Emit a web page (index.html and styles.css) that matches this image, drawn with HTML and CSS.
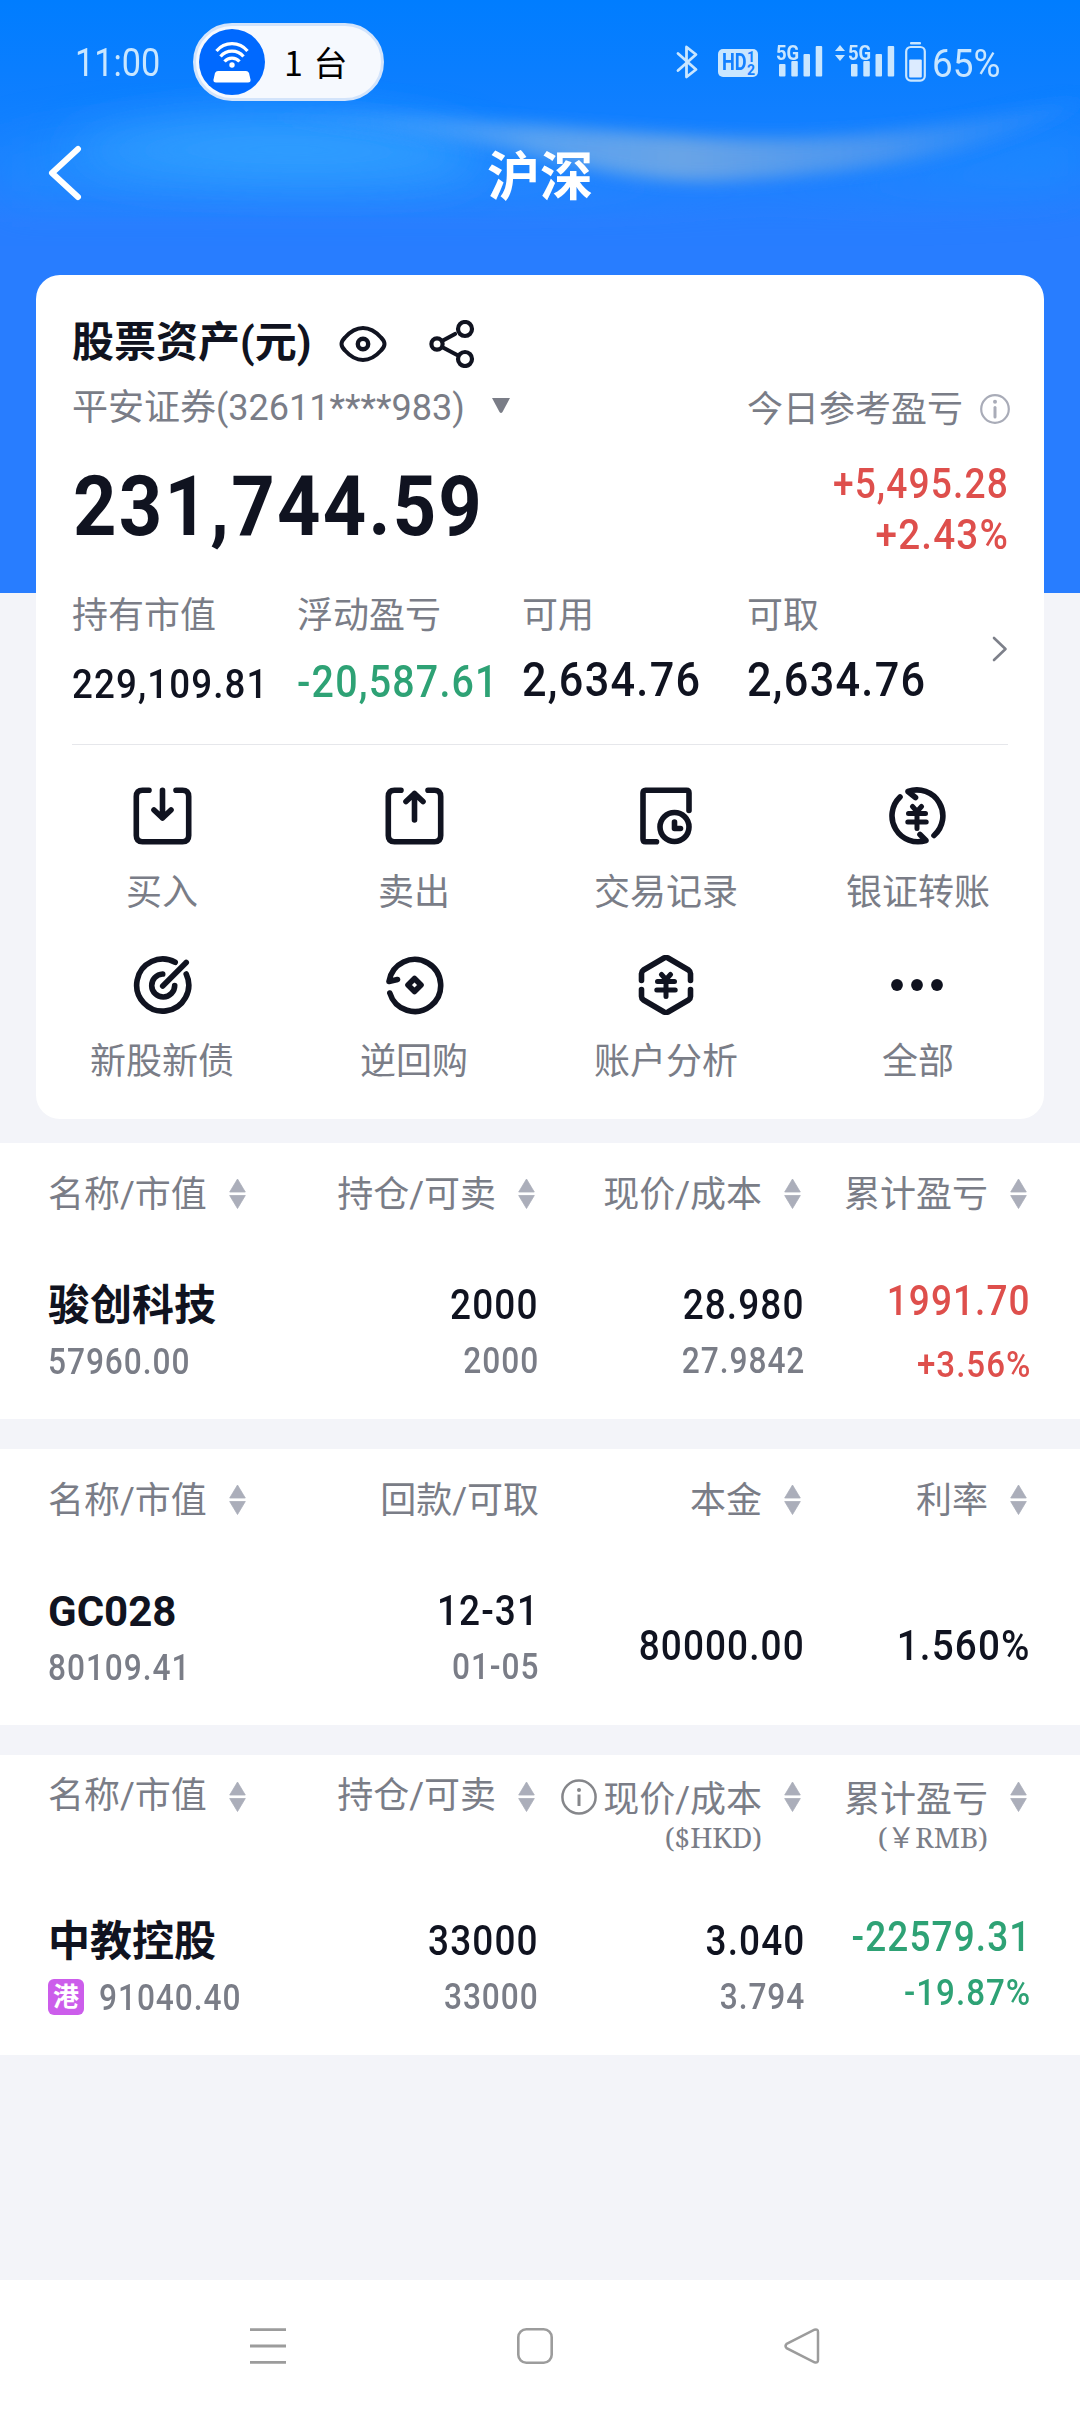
FILE: index.html
```html
<!DOCTYPE html>
<html lang="zh-CN">
<head>
<meta charset="utf-8">
<title>沪深</title>
<link rel="stylesheet" href="styles.css">
</head>
<body>
<svg class="defs" width="0" height="0" aria-hidden="true">
  <symbol id="sort" viewBox="0 0 17 31">
    <path d="M8.5 1 16.300 14H.7zM8.5 30.500 16.300 17.500H.7z" fill="#abaeba" stroke="#abaeba" stroke-width=".8" stroke-linejoin="round"/>
  </symbol>
  <symbol id="signal" viewBox="0 0 44 31">
    <g fill="#c9e6ff"><rect x="0" y="18" width="6.500" height="12.500" rx="1"/><rect x="12.300" y="15" width="6.500" height="15.500" rx="1"/><rect x="24.500" y="8" width="6.500" height="22.500" rx="1"/><rect x="36.700" y="0" width="6.500" height="30.500" rx="1"/></g>
  </symbol>
  <symbol id="yen" viewBox="0 0 24 28">
    <path d="M7.500 3.500 12 8.500 16.500 3.500M3.500 10.500H20.500M2.800 19H21.200M12 9V25.500" fill="none" stroke="#101320" stroke-width="5" stroke-linecap="round" stroke-linejoin="round"/>
  </symbol>
</svg>

<header class="hero">
  <svg class="hero-art" viewBox="0 0 1080 593" aria-hidden="true">
    <defs>
      <linearGradient id="streak" x1="0" x2="1" y1="0" y2="0">
        <stop offset="0" stop-color="#3ba0ff" stop-opacity="0"/>
        <stop offset=".22" stop-color="#4aa0fa" stop-opacity=".7"/>
        <stop offset=".35" stop-color="#5fa5f0"/>
        <stop offset=".52" stop-color="#72a8e4"/>
        <stop offset=".75" stop-color="#4f98ef"/>
        <stop offset="1" stop-color="#2389ff" stop-opacity=".5"/>
      </linearGradient>
      <filter id="soft" x="-20%" y="-60%" width="140%" height="220%"><feGaussianBlur stdDeviation="24"/></filter>
      <filter id="edge" x="-10%" y="-40%" width="120%" height="180%"><feGaussianBlur stdDeviation="8"/></filter>
    </defs>
    <path d="M0 150C120 122 300 115 420 140S680 195 800 185 980 155 1080 130V185C900 200 500 200 0 200Z" fill="#2593ff" filter="url(#soft)" opacity=".5"/>
    <path d="M60 150C160 118 290 112 400 128S500 168 420 176 110 182 60 150Z" fill="#35a3ff" filter="url(#soft)" opacity=".9"/>
    <path d="M240 116C420 110 520 126 690 136S960 122 1090 98C1000 156 860 172 740 180S560 155 440 138 300 124 240 116Z" fill="url(#streak)" filter="url(#edge)" opacity=".9"/>
  </svg>
  <div class="status">
    <span class="clock"><span class="narrow">11:00</span></span>
    <div class="pill">
      <svg width="66" height="66" viewBox="0 0 66 66">
        <circle cx="33" cy="33" r="33" fill="#0069ff"/>
        <g fill="none" stroke="#fff" stroke-width="3.200"><path d="M17.500 22A20 20 0 0 1 48.500 22"/><path d="M21.500 27.500A15 15 0 0 1 44.500 27.500"/><path d="M25.500 32.500A10 10 0 0 1 40.500 32.500"/></g>
        <circle cx="33" cy="36" r="2.700" fill="#fff"/>
        <path d="M19 42H47Q49 42 50 44L51.500 50.500Q52 53.500 49 53.500H17Q14 53.500 14.500 50.500L16 44Q17 42 19 42Z" fill="#fff"/>
      </svg>
      <span class="pill-text">1 台</span>
    </div>
    <div class="status-right">
      <svg class="bt" width="22" height="36" viewBox="0 0 22 36"><path d="M2 9.500 20 25.500 10.500 33V3L20 10.500 2 26.500" fill="none" stroke="#c9e6ff" stroke-width="2.800" stroke-linecap="round" stroke-linejoin="round"/></svg>
      <div class="hd"><span class="hd-main">HD</span><span class="hd-num"><i>1</i><i>2</i></span></div>
      <div class="sig"><span class="g5">5G</span><svg class="bars" width="44" height="31"><use href="#signal"/></svg></div>
      <div class="sig two"><svg class="updown" width="10" height="16" viewBox="0 0 10 16"><path d="M5 0 10 6H0zM5 16 10 10H0z" fill="#c9e6ff"/></svg><span class="g5">5G</span><svg class="bars" width="44" height="31"><use href="#signal"/></svg></div>
      <svg class="bat" width="21" height="40" viewBox="0 0 21 40"><rect x="5" y="0" width="11" height="2.600" rx="1" fill="#c9e6ff"/><rect x="1.200" y="5" width="18.600" height="33.600" rx="4.500" fill="none" stroke="#c9e6ff" stroke-width="2.200"/><rect x="4.200" y="17.500" width="12.600" height="18" rx="1" fill="#dcebff"/></svg>
      <span class="pct">65%</span>
    </div>
  </div>
  <div class="titlebar">
    <svg class="back" width="34" height="56" viewBox="0 0 34 56"><path d="M30 4 4 28 30 52" fill="none" stroke="#fff" stroke-width="6" stroke-linecap="round" stroke-linejoin="round"/></svg>
    <h1>沪深</h1>
  </div>
</header>

<section class="card">
  <div class="asset-head">
    <span class="asset-title">股票资产(元)</span>
    <svg class="eye" width="48" height="38" viewBox="0 0 48 38"><path d="M2.500 19Q2.500 16 6 12.500C10 8 16 3 24 3S38 8 42 12.500Q45.500 16 45.500 19T42 25.500C38 30 32 35 24 35S10 30 6 25.500Q2.500 22 2.500 19Z" fill="none" stroke="#101320" stroke-width="4"/><circle cx="24" cy="19" r="5.200" fill="none" stroke="#101320" stroke-width="4.400"/></svg>
    <svg class="share" width="46" height="48" viewBox="0 0 46 48"><g fill="none" stroke="#101320" stroke-width="4.200"><circle cx="8" cy="24" r="5.600"/><circle cx="36" cy="9" r="7"/><circle cx="36" cy="39" r="7"/><path d="M13 21 26 14" stroke-linecap="round"/><path d="M13 27 30 36"/></g></svg>
  </div>
  <div class="account">
    <span class="account-name">平安证券(32611****983)</span>
    <svg width="18" height="15" viewBox="0 0 18 15"><path d="M0 0H18L10.500 14Q9 16 7.500 14Z" fill="#7a7d87"/></svg>
    <span class="today">今日参考盈亏</span>
    <svg class="info" width="30" height="30" viewBox="0 0 30 30"><circle cx="15" cy="15" r="13.800" fill="none" stroke="#a9acb8" stroke-width="2.200"/><circle cx="15" cy="7.800" r="2" fill="#a9acb8"/><path d="M15 13.500V23" stroke="#a9acb8" stroke-width="3" stroke-linecap="round"/></svg>
  </div>
  <div class="total">
    <span class="total-num narrow">231,744.59</span>
    <div class="total-day red"><span class="narrow-r">+5,495.28</span><span class="narrow-r percent">+2.43%</span></div>
  </div>
  <div class="stats">
    <div class="stat"><span>持有市值</span><b class="s1 narrow">229,109.81</b></div>
    <div class="stat"><span>浮动盈亏</span><b class="s2 narrow green">-20,587.61</b></div>
    <div class="stat"><span>可用</span><b class="s3 narrow">2,634.76</b></div>
    <div class="stat"><span>可取</span><b class="s3 narrow">2,634.76</b></div>
    <svg class="more" width="16" height="26" viewBox="0 0 16 26"><path d="M2 2 13.500 13 2 24" fill="none" stroke="#7d808a" stroke-width="2.600" stroke-linecap="round" stroke-linejoin="round"/></svg>
  </div>
  <div class="menu">
    <div class="item">
      <svg width="60" height="60" viewBox="0 0 60 60"><g fill="none" stroke="#101320" stroke-width="5.600" stroke-linecap="round" stroke-linejoin="round"><path d="M17 4.300H10.500Q4.300 4.300 4.300 10.500V49.500Q4.300 55.700 10.500 55.700H50.500Q56.700 55.700 56.700 49.500V10.500Q56.700 4.300 50.500 4.300H44"/><path d="M30.500 4.300V32M22 24 30.500 32 39 24"/></g></svg>
      <span>买入</span></div>
    <div class="item">
      <svg width="60" height="60" viewBox="0 0 60 60"><g fill="none" stroke="#101320" stroke-width="5.600" stroke-linecap="round" stroke-linejoin="round"><path d="M17 4.300H10.500Q4.300 4.300 4.300 10.500V49.500Q4.300 55.700 10.500 55.700H50.500Q56.700 55.700 56.700 49.500V10.500Q56.700 4.300 50.500 4.300H44"/><path d="M30.500 34V7.500M22 15.500 30.500 7.500 39 15.500"/></g></svg>
      <span>卖出</span></div>
    <div class="item">
      <svg width="60" height="60" viewBox="0 0 60 60"><g fill="none" stroke="#101320" stroke-width="5.600" stroke-linecap="round" stroke-linejoin="round"><path d="M20.500 55.700H9.500Q7 55.700 7 53V7Q7 4.300 9.500 4.300H50.500Q53 4.300 53 7V24.500"/><circle cx="38.500" cy="41" r="14.500"/><path d="M38.500 36V42.500H44.500"/></g></svg>
      <span>交易记录</span></div>
    <div class="item">
      <svg width="60" height="60" viewBox="0 0 60 60"><g transform="translate(-1 0)"><g fill="none" stroke="#101320" stroke-width="5.600" stroke-linecap="round" stroke-linejoin="round"><path d="M13 11A26 26 0 0 0 39 54.500L33 48.500"/><path d="M47 49.500A26 26 0 0 0 21 5.500L28.500 11.500"/></g><use href="#yen" x="18" y="17" width="24" height="28"/></g></svg>
      <span>银证转账</span></div>
    <div class="item">
      <svg width="60" height="60" viewBox="0 0 60 60"><g transform="translate(.7 0)" fill="none" stroke="#101320" stroke-width="5.600" stroke-linecap="round" stroke-linejoin="round"><path d="M42.500 7.300A26 26 0 1 0 53.500 19"/><path d="M30 19A11.500 11.500 0 1 0 42 30.500"/><path d="M30 31 53.500 7.500"/></g></svg>
      <span>新股新债</span></div>
    <div class="item">
      <svg width="60" height="60" viewBox="0 0 60 60"><g transform="translate(.5 0)" fill="none" stroke="#101320" stroke-width="5.600" stroke-linecap="round" stroke-linejoin="round"><path d="M5.300 38A26 26 0 1 0 4.500 26.500L13 24.500"/><path d="M30 23.500 36.500 30 30 36.500 23.500 30Z"/></g></svg>
      <span>逆回购</span></div>
    <div class="item">
      <svg width="60" height="60" viewBox="0 0 60 60"><g fill="none" stroke="#101320" stroke-width="5.600" stroke-linecap="round" stroke-linejoin="round"><path d="M5.500 25.500V18.500Q5.500 16.500 7.500 15L28 3Q30 2 32 3L52.500 15Q54.500 16.500 54.500 18.500V25.500"/><path d="M5.500 34.500V41.500Q5.500 43.500 7.500 45L28 57Q30 58 32 57L52.500 45Q54.500 43.500 54.500 41.500V34.500"/></g><use href="#yen" x="18" y="16" width="24" height="28"/></svg>
      <span>账户分析</span></div>
    <div class="item">
      <svg width="60" height="60" viewBox="0 0 60 60"><g fill="#101320"><circle cx="9" cy="30" r="5.900"/><circle cx="29" cy="30" r="5.900"/><circle cx="49" cy="30" r="5.900"/></g></svg>
      <span>全部</span></div>
  </div>
</section>

<section class="panel">
  <div class="row head">
    <div class="h"><span>名称/市值</span><svg class="sort"><use href="#sort"/></svg></div>
    <div class="h"><span>持仓/可卖</span><svg class="sort"><use href="#sort"/></svg></div>
    <div class="h"><span>现价/成本</span><svg class="sort"><use href="#sort"/></svg></div>
    <div class="h"><span>累计盈亏</span><svg class="sort"><use href="#sort"/></svg></div>
  </div>
  <div class="row body">
    <div class="c"><b class="name">骏创科技</b><span class="sub">57960.00</span></div>
    <div class="c"><span class="val">2000</span><span class="sub">2000</span></div>
    <div class="c"><span class="val">28.980</span><span class="sub">27.9842</span></div>
    <div class="c high wide red"><span class="val">1991.70</span><span class="sub percent">+3.56%</span></div>
  </div>
</section>

<section class="panel">
  <div class="row head">
    <div class="h"><span>名称/市值</span><svg class="sort"><use href="#sort"/></svg></div>
    <div class="h plain"><span>回款/可取</span></div>
    <div class="h"><span>本金</span><svg class="sort"><use href="#sort"/></svg></div>
    <div class="h"><span>利率</span><svg class="sort"><use href="#sort"/></svg></div>
  </div>
  <div class="row body">
    <div class="c"><b class="name latin">GC028</b><span class="sub">80109.41</span></div>
    <div class="c"><span class="val">12-31</span><span class="sub">01-05</span></div>
    <div class="c single"><span class="val">80000.00</span></div>
    <div class="c single"><span class="val percent">1.560%</span></div>
  </div>
</section>

<section class="panel hk">
  <div class="row head">
    <div class="h"><span>名称/市值</span><svg class="sort"><use href="#sort"/></svg></div>
    <div class="h"><span>持仓/可卖</span><svg class="sort"><use href="#sort"/></svg></div>
    <div class="h"><svg class="info2" width="36" height="36" viewBox="0 0 36 36"><circle cx="18" cy="18" r="16.600" fill="none" stroke="#85868a" stroke-width="2.500"/><circle cx="18" cy="11" r="2" fill="#85868a"/><path d="M18 15.500V27" stroke="#85868a" stroke-width="3"/></svg><span class="dual">现价/成本<small>($HKD)</small></span><svg class="sort"><use href="#sort"/></svg></div>
    <div class="h"><span class="dual">累计盈亏<small>(￥RMB)</small></span><svg class="sort"><use href="#sort"/></svg></div>
  </div>
  <div class="row body">
    <div class="c"><b class="name">中教控股</b><span class="tagged"><i class="tag">港</i><span class="sub">91040.40</span></span></div>
    <div class="c"><span class="val">33000</span><span class="sub">33000</span></div>
    <div class="c"><span class="val">3.040</span><span class="sub">3.794</span></div>
    <div class="c high green"><span class="val">-22579.31</span><span class="sub percent">-19.87%</span></div>
  </div>
</section>

<nav class="navbar">
  <svg width="36" height="36" viewBox="0 0 36 36"><path d="M0 1.700H36M0 18H36M0 34.300H36" stroke="#9c9c9c" stroke-width="2.800"/></svg>
  <svg width="36" height="36" viewBox="0 0 36 36"><rect x="1.300" y="1.300" width="33.400" height="33.400" rx="8" fill="none" stroke="#9c9c9c" stroke-width="2.600"/></svg>
  <svg width="36" height="36" viewBox="0 0 36 36"><path d="M2.600 15.800 30.500 1.700Q34 .500 34 4V32Q34 35.500 30.500 34.300L2.600 20.200Q.500 18 2.600 15.800Z" fill="none" stroke="#9c9c9c" stroke-width="2.500"/></svg>
</nav>
</body>
</html>
```
FILE: styles.css
```css
* { box-sizing: border-box; }

body {
  margin: 0;
  width: 1080px;
  height: 2412px;
  display: flex;
  flex-direction: column;
  background: #f3f4f9;
  color: #101320;
  font-family: Roboto, "Noto Sans CJK SC", sans-serif;
  font-size: 36px;
  overflow: hidden;
}

svg { display: block; flex: none; }
b, i { font-weight: inherit; font-style: normal; }
.defs { position: absolute; }
.red { color: #de4f4c; }
.green { color: #2ea275; }

/* Figures are set condensed, with a little extra tracking */
.narrow, .narrow-r { display: block; transform: scaleX(.885); transform-origin: left; letter-spacing: .03em; white-space: nowrap; }
.narrow-r { transform-origin: right; margin-right: -1px; }

/* Header */
.hero {
  position: relative;
  flex: none;
  height: 593px;
  background: linear-gradient(180deg, #007dff 0, #0a7eff 70px, #1880ff 160px, #287dff 225px, #287dff 100%);
}
.hero-art { position: absolute; inset: 0; width: 1080px; height: 593px; }

.status {
  position: relative;
  height: 124px;
  padding: 0 76px 0 75px;
  display: flex;
  align-items: center;
  color: #c9e6ff;
}
.clock { width: 118px; font-size: 38px; line-height: 40px; margin-top: 2px; }
.clock .narrow { transform: scaleX(.9); letter-spacing: 0; }
.pill {
  width: 191px;
  height: 78px;
  padding: 3px;
  border: 3px solid #d3e4fb;
  border-radius: 39px;
  background: #f6f9fe;
  display: flex;
  align-items: center;
}
.pill-text { margin-left: 19px; color: #000; font-size: 34px; line-height: 50px; font-family: "Noto Sans CJK SC", sans-serif; font-weight: 400; word-spacing: 3px; }
.status-right { margin-left: auto; display: flex; align-items: flex-start; height: 40px; width: 329px; }
.bt { margin: 2px 0 0 1px; }
.hd { margin: 7px 0 0 20px; width: 40px; height: 28px; border-radius: 5px; background: #c9e6ff; color: #1480ff; display: flex; padding-left: 4px; font-weight: 700; }
.hd-main { width: 25px; font-size: 23px; line-height: 28px; transform: scaleX(.79); transform-origin: left; }
.hd-num { display: flex; flex-direction: column; padding-top: 2px; font-size: 14px; line-height: 13px; }
.sig { position: relative; width: 47px; height: 40px; margin-left: 18px; }
.sig.two { width: 60px; margin-left: 12px; }
.g5 { position: absolute; left: 0; top: 0; font-size: 21px; line-height: 22px; font-weight: 700; transform: scaleX(.88); transform-origin: left; }
.two .g5 { left: 13px; }
.bars { position: absolute; left: 3px; top: 4px; }
.two .bars { left: 16px; }
.updown { position: absolute; left: 0; top: 3px; }
.bat { margin-left: 10px; }
.pct { margin: 1px 0 0 6px; font-size: 38px; line-height: 42px; transform: scaleX(.97); transform-origin: left; }

.titlebar { position: relative; height: 100px; display: flex; align-items: center; }
.back { margin: -2px 0 0 48px; }
h1 { margin: 8px 82px 0 0; flex: 1; text-align: center; color: #fff; font-size: 53px; line-height: 60px; font-weight: 700; }

/* Asset card */
.card {
  position: relative;
  flex: none;
  height: 844px;
  margin: -318px 36px 24px;
  padding: 39px 0 0 36px;
  background: #fff;
  border-radius: 24px;
}
.asset-head { height: 60px; display: flex; align-items: center; }
.asset-title { width: 267px; margin-top: -2px; font-size: 42px; line-height: 60px; font-weight: 700; white-space: nowrap; }
.share { margin-left: 42px; }
.account { height: 66px; display: flex; align-items: center; color: #7a7d87; }
.account svg { margin-top: -3px; }
.account-name { width: 420px; line-height: 60px; margin-top: 1px; white-space: nowrap; }
.today { width: 233px; margin: 6px 0 0 237px; line-height: 60px; }
.account .info { margin-top: 4px; }
.total { height: 136px; display: flex; justify-content: space-between; padding-right: 36px; }
.total-num { font-size: 84px; line-height: 100px; margin: 17px 0 0 1px; font-weight: 700; transform: scaleX(.902); }
.total-day { display: flex; flex-direction: column; align-items: flex-end; padding-top: 18px; font-size: 42px; line-height: 51px; font-weight: 500; }

.stats { position: relative; width: 936px; height: 169px; display: flex; border-bottom: 1px solid #e6e7eb; }
.stat { width: 225px; color: #7a7d87; line-height: 50px; padding-top: 15px; }
.stat > span { display: block; }
.stat b { color: #101320; font-weight: 500; line-height: 50px; }
.stat b.green { color: #2ea275; }
.stat .s1 { font-size: 41.5px; margin-top: 18px; }
.stat .s2 { font-size: 44.5px; margin-top: 16px; }
.stat .s3 { font-size: 48px; margin-top: 14px; transform: scaleX(.9); }
.more { position: absolute; right: 0; top: 60px; }

.menu { margin-left: -36px; display: grid; grid-template-columns: repeat(4, 252px); grid-auto-rows: 169px; padding-top: 41px; }
.item { display: flex; flex-direction: column; align-items: center; color: #7a7d87; }
.item span { margin-top: 21px; line-height: 52px; }

/* Holdings */
.panel { flex: none; height: 276px; margin-bottom: 30px; background: #fff; }
.row { display: grid; grid-template-columns: 250px 239px 266px 226px; padding-left: 48px; }
.head { height: 100px; color: #7a7d87; }
.h { display: flex; justify-content: flex-end; align-items: center; padding-right: 2px; line-height: 52px; white-space: nowrap; }
.h > span { margin-top: 3px; }
.h:first-child { justify-content: flex-start; }
.h.plain { padding-right: 0; margin-right: -2px; }
.sort { width: 17px; height: 31px; margin-left: 22px; }
.body { padding-top: 35px; }
.c { display: flex; flex-direction: column; align-items: flex-end; margin-top: -1px; margin-right: -2px; }
.c:first-child { align-items: flex-start; margin: 0; }
.val, .sub { font-weight: 500; line-height: 56px; letter-spacing: .03em; transform: scaleX(.88); transform-origin: right; white-space: nowrap; }
.val { font-size: 42px; }
.sub { color: #7a7d87; font-size: 36px; }
.narrow-r.percent, .val.percent, .sub.percent { transform: scaleX(.92); }
.c:first-child .sub { transform-origin: left; }
.name { font-size: 42px; line-height: 56px; font-weight: 700; }
.latin { transform-origin: left; }
.high { margin-top: -5px; }
.wide { gap: 8px; }
.red .sub, .green .sub { color: inherit; }
.single { margin-top: 34px; }

.hk { height: 300px; margin-bottom: 0; }
.hk .head { height: 124px; }
.hk .h { align-items: flex-start; padding-top: 14px; }
.hk .sort { margin-top: 12px; }
.hk .h > span { margin-top: 1px; }
.info2 { margin: 10px 6px 0 0; }
.dual { display: flex; flex-direction: column; align-items: flex-end; padding-top: 4px; }
small { font-family: "Noto Serif", "Liberation Serif", "Noto Sans CJK SC", serif; font-size: 28px; line-height: 30px; margin-top: -4px; }
.hk .body { padding-top: 35px; }
.tagged { display: flex; align-items: center; height: 56px; }
.tag { width: 36px; height: 36px; margin: -3px 15px 0 0; border-radius: 6px; background: #cc5deb; color: #fff; font-size: 26px; line-height: 36px; font-weight: 700; text-align: center; }

.navbar { margin-top: auto; flex: none; height: 132px; padding: 48px 260px 0 250px; background: #fff; display: flex; justify-content: space-between; }
```
